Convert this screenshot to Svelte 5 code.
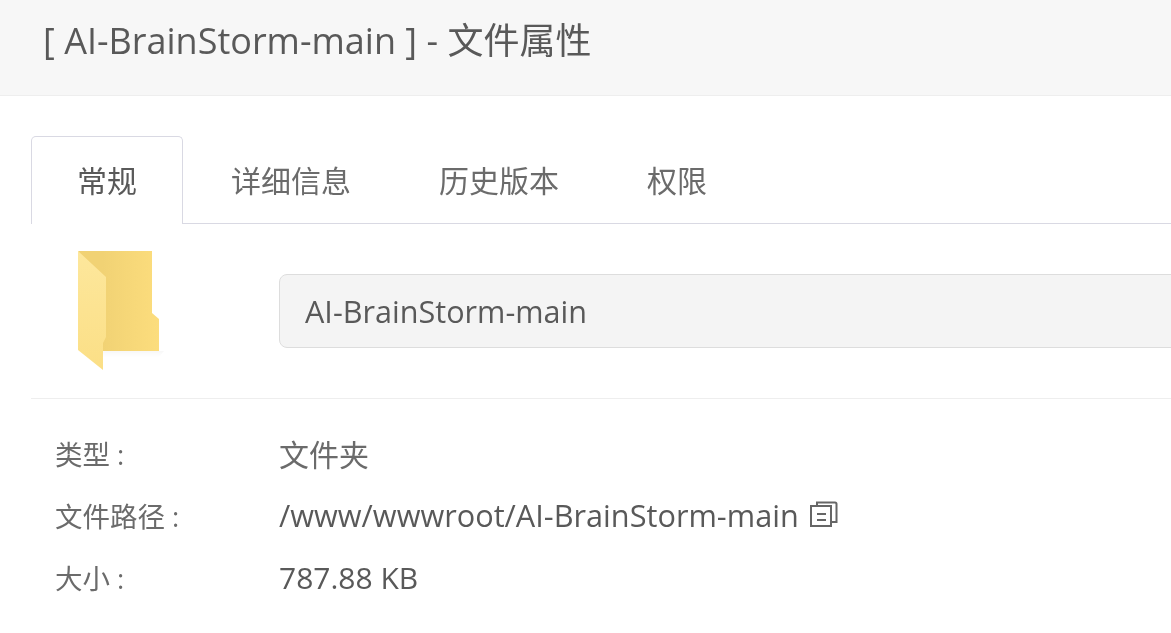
<script>
    let tabs = ['常规', '详细信息', '历史版本', '权限'];
    let active = 0;
    let rows = [
        { label: '类型', value: '文件夹', kind: 'cjk' },
        { label: '文件路径', value: '/www/wwwroot/AI-BrainStorm-main', kind: 'path', copy: true },
        { label: '大小', value: '787.88 KB', kind: 'size' }
    ];
</script>

<div class="page">
    <header class="title">[ AI-BrainStorm-main ] - 文件属性</header>
    <div class="body">
        <ul class="tabs">
            {#each tabs as tab, i}
                <li class:active={i === active}>{tab}</li>
            {/each}
        </ul>
        <div class="summary">
            <div class="icon">
                <svg width="100" height="130" viewBox="0 0 100 130">
                    <defs>
                        <linearGradient id="back" x1="0" x2="1" y1="0" y2="0">
                            <stop offset="0.3" stop-color="#f1d274" />
                            <stop offset="1" stop-color="#fcdd7d" />
                        </linearGradient>
                        <linearGradient id="flap" x1="0" x2="0" y1="0" y2="1">
                            <stop offset="0" stop-color="#fde79c" />
                            <stop offset="1" stop-color="#fbdf86" />
                        </linearGradient>
                        <linearGradient id="shade" x1="0" x2="0" y1="0" y2="1">
                            <stop offset="0" stop-color="#000" stop-opacity="0.03" />
                            <stop offset="1" stop-color="#000" stop-opacity="0" />
                        </linearGradient>
                    </defs>
                    <path d="M29 106 H90 L85 112 H29 Z" fill="url(#shade)" />
                    <path d="M4 6 H78 V68 L85 74 V106 H29 V50 Z" fill="url(#back)" />
                    <path d="M4 6 L32 32 V92 L29 98 V125 L4 105 Z" fill="url(#flap)" />
                </svg>
            </div>
            <input class="name" value="AI-BrainStorm-main" readonly />
        </div>
        <dl class="info">
            {#each rows as row}
                <div class="row">
                    <dt>{row.label}<span class="colon">:</span></dt>
                    <dd class={row.kind}>
                        {row.value}
                        {#if row.copy}
                            <svg class="copy" width="28" height="28" viewBox="0 0 28 28" fill="none" stroke="#666" stroke-width="2">
                                <rect x="1" y="5" width="20" height="20" />
                                <path d="M7 4.500 V1.500 H25 Q26.500 1.500 26.500 3 V21 H22" />
                                <path d="M7 13 H16 M7 19 H16" />
                            </svg>
                        {/if}
                    </dd>
                </div>
            {/each}
        </dl>
    </div>
</div>

<style>
    :global(body) {
        background: #fff;
        overflow: hidden;
    }

    .page {
        width: 1171px;
        height: 633px;
        overflow: hidden;
        color: #595959;
        font-family: "Open Sans", "Noto Sans CJK SC", sans-serif;
        filter: blur(0.4px);
    }

    .title {
        height: 95px;
        padding-left: 43px;
        line-height: 81px;
        font-size: 36px;
        background: #f7f7f7;
        border-bottom: 1px solid #eee;
        white-space: nowrap;
    }

    .body {
        padding: 40px 0 0 31px;
    }

    .tabs {
        display: flex;
        height: 88px;
        margin: 0;
        padding: 0;
        list-style: none;
        border-bottom: 1px solid #d9d9e3;
        box-sizing: border-box;
    }

    .tabs li {
        padding: 0 43px;
        line-height: 88px;
        font-size: 30px;
        color: #6b6b6b;
        box-sizing: border-box;
        height: 88px;
        border: 1px solid transparent;
        border-bottom: 0;
    }

    .tabs li.active {
        width: 152px;
        margin-right: 4px;
        padding: 0 45px;
        color: #595959;
        background: #fff;
        border-color: #d9d9e3;
        border-radius: 5px 5px 0 0;
    }

    .summary {
        display: flex;
        align-items: flex-start;
        height: 175px;
        border-bottom: 1px solid #eee;
        box-sizing: border-box;
    }

    .icon {
        width: 248px;
        padding: 21px 0 0 43px;
        box-sizing: border-box;
        flex: none;
    }

    .icon svg {
        display: block;
    }

    .name {
        flex: none;
        width: 1000px;
        height: 74px;
        margin-top: 50px;
        padding: 0 25px;
        box-sizing: border-box;
        font: inherit;
        font-size: 30.6px;
        color: #595959;
        background: #f4f4f4;
        border: 1px solid #ddd;
        border-radius: 8px;
        outline: none;
    }

    .info {
        margin: 0;
        padding: 23px 0 0 24px;
    }

    .row {
        display: flex;
        align-items: center;
        height: 62px;
    }

    dt {
        width: 224px;
        flex: none;
        font-size: 27.5px;
        color: #6b6b6b;
    }

    .colon {
        margin-left: 7px;
    }

    dd {
        display: flex;
        align-items: center;
        gap: 11px;
        margin: 0;
        font-size: 30px;
        white-space: nowrap;
    }

    dd.cjk {
        color: #6b6b6b;
    }

    dd.path {
        font-size: 30.7px;
    }

    .copy {
        flex: none;
    }
</style>
